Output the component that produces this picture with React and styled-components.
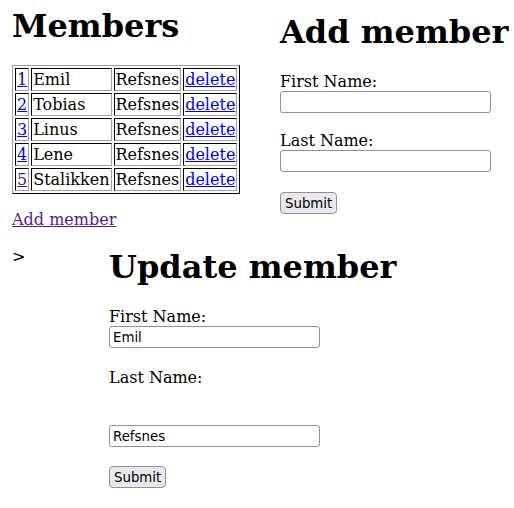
import React from "react";
import styled, { createGlobalStyle } from "styled-components";

const members = [
  { id: 1, first: "Emil", last: "Refsnes" },
  { id: 2, first: "Tobias", last: "Refsnes" },
  { id: 3, first: "Linus", last: "Refsnes" },
  { id: 4, first: "Lene", last: "Refsnes" },
  { id: 5, first: "Stalikken", last: "Refsnes", visited: true },
];

const App = () => {
  return (
    <>
      <GlobalStyle />
      <Page>
        <TopRow>
          <MembersCol>
            <Title $top={8} $bottom={20}>Members</Title>
            <MemberTable>
              <tbody>
                {members.map((m) => (
                  <tr key={m.id}>
                    <Cell>
                      <Link href="#" $visited={m.visited}>
                        {m.id}
                      </Link>
                    </Cell>
                    <Cell>{m.first}</Cell>
                    <Cell>{m.last}</Cell>
                    <Cell>
                      <Link href="#">delete</Link>
                    </Cell>
                  </tr>
                ))}
              </tbody>
            </MemberTable>
            <LinkLine>
              <Link href="#" $visited>
                Add member
              </Link>
            </LinkLine>
          </MembersCol>
          <AddCol>
            <Title $top={14}>Add member</Title>
            <Form>
              <Label>First Name:</Label>
              <Input type="text" />
              <Label $gap={18}>Last Name:</Label>
              <Input type="text" />
              <Button $gap={20}>Submit</Button>
            </Form>
          </AddCol>
        </TopRow>
        <BottomRow>
          <Arrow>&gt;</Arrow>
          <div>
            <Title $top={3}>Update member</Title>
            <Form>
              <Label>First Name:</Label>
              <Input type="text" defaultValue="Emil" />
              <Label $gap={20}>Last Name:</Label>
              <Input type="text" defaultValue="Refsnes" $gap={38} />
              <Button $gap={19}>Submit</Button>
            </Form>
          </div>
        </BottomRow>
      </Page>
    </>
  );
};

const GlobalStyle = createGlobalStyle`
  body {
    margin: 0;
    background: #fff;
    color: #000;
    font-family: "DejaVu Serif", serif;
    font-size: 16px;
    overflow: hidden;
  }
`;

const Page = styled.div`
  padding: 0 12px;
`;

const TopRow = styled.div`
  display: flex;
  align-items: flex-start;
`;

const MembersCol = styled.div`
  flex: 0 0 268px;
`;

const AddCol = styled.div`
  flex: 0 0 auto;
`;

const Title = styled.h1`
  margin: ${(p) => p.$top || 0}px 0 ${(p) => p.$bottom ?? 21}px;
  font-size: 32px;
  font-weight: bold;
  line-height: 37px;
  white-space: nowrap;
`;

const MemberTable = styled.table`
  border: 1px outset #808080;
  border-spacing: 2px;
  border-color: #a0a0a0 #505050 #505050 #a0a0a0;
`;

const Cell = styled.td`
  border: 1px inset #808080;
  border-color: #505050 #a0a0a0 #a0a0a0 #505050;
  padding: 1px;
  line-height: 19px;
`;

const Link = styled.a`
  color: ${(p) => (p.$visited ? "#551a8b" : "#0000ee")};
  text-decoration: underline;
`;

const LinkLine = styled.p`
  margin: 16px 0 0;
  line-height: 19px;
`;

const Form = styled.form`
  display: flex;
  flex-direction: column;
  align-items: flex-start;
`;

const Label = styled.label`
  margin-top: ${(p) => p.$gap || 0}px;
  line-height: 19px;
`;

const Input = styled.input`
  box-sizing: border-box;
  width: 211px;
  height: 22px;
  margin-top: ${(p) => p.$gap || 0}px;
  padding: 1px 3px;
  border: 1px solid #8f8f9d;
  border-radius: 3px;
  background: #fff;
  font-family: "DejaVu Sans", sans-serif;
  font-size: 13.33px;
  color: #000;
`;

const Button = styled.button`
  box-sizing: border-box;
  height: 22px;
  margin-top: ${(p) => p.$gap || 0}px;
  padding: 0 4px;
  border: 1px solid #8f8f9d;
  border-radius: 4px;
  background: #e9e9ed;
  font-family: "DejaVu Sans", sans-serif;
  font-size: 13.33px;
  color: #000;
`;

const BottomRow = styled.div`
  display: flex;
  align-items: flex-start;
  margin-top: 17px;
`;

const Arrow = styled.span`
  flex: 0 0 97px;
  padding-top: 1px;
  font-family: "DejaVu Sans", sans-serif;
  font-size: 16px;
  line-height: 19px;
`;

export default App;
